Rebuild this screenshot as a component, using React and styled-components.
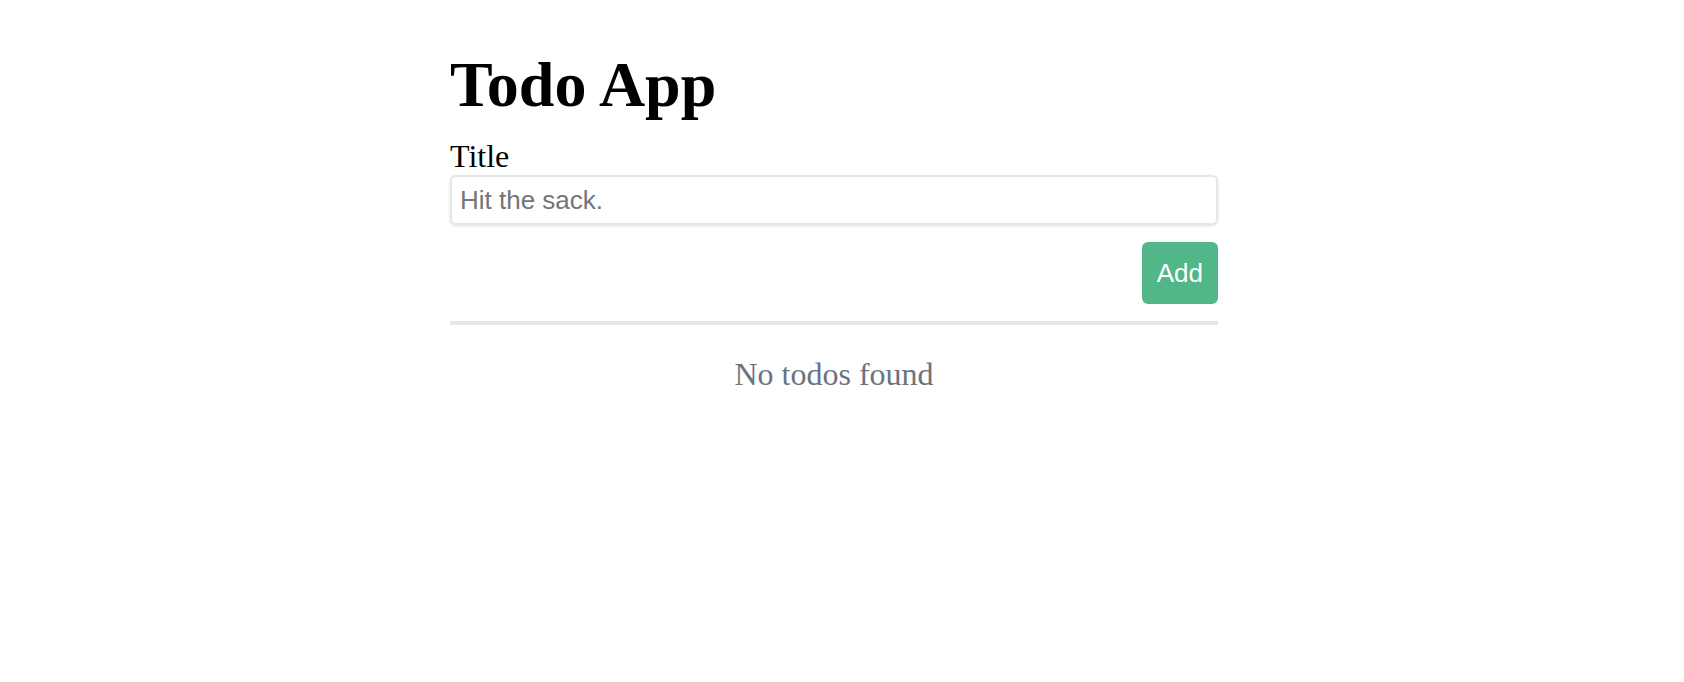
import React, { useState } from "react";
import styled, { createGlobalStyle } from "styled-components";

const GlobalStyle = createGlobalStyle`
  html, body {
    margin: 0;
    padding: 0;
    background: #ffffff;
  }
  body {
    font-family: 'Liberation Serif', 'Times New Roman', serif;
    color: #000000;
  }
`;

const App = () => {
    const [title, setTitle] = useState("");
    const [todos, setTodos] = useState([]);

    const addTodo = () => {
        if (!title.trim()) return;
        setTodos([...todos, {id: Date.now(), title: title.trim()}]);
        setTitle("");
    };

    return (
        <Page>
            <GlobalStyle/>
            <Container>
                <Heading>Todo App</Heading>
                <Label htmlFor="title">Title</Label>
                <TitleInput
                    id="title"
                    placeholder="Hit the sack."
                    value={title}
                    onChange={e => setTitle(e.target.value)}
                />
                <Actions>
                    <AddButton onClick={addTodo}>Add</AddButton>
                </Actions>
                <Divider/>
                {todos.length === 0 ? (
                    <Empty>No todos found</Empty>
                ) : (
                    <TodoList>
                        {todos.map(todo => <TodoItem key={todo.id}>{todo.title}</TodoItem>)}
                    </TodoList>
                )}
            </Container>
        </Page>
    );
};

const Page = styled.div`
  padding-right: 16px;
  min-height: 682px;
  box-sizing: border-box;
`;

const Container = styled.div`
  width: 768px;
  margin: 0 auto;
  padding-top: 55px;
`;

const Heading = styled.h1`
  margin: 0 0 23px;
  font-size: 64px;
  line-height: 60px;
  font-weight: 700;
`;

const Label = styled.label`
  display: block;
  font-size: 32px;
  line-height: 36px;
`;

const TitleInput = styled.input`
  display: block;
  box-sizing: border-box;
  width: 100%;
  height: 50px;
  margin-top: 1px;
  padding: 0 8px;
  border: 2px solid #e5e7eb;
  border-radius: 6px;
  box-shadow: 0 1px 3px rgba(0, 0, 0, 0.12);
  font-family: 'Liberation Sans', Arial, sans-serif;
  font-size: 26px;
  color: #111827;
  outline: none;

  &::placeholder {
    color: #757575;
  }
`;

const Actions = styled.div`
  display: flex;
  justify-content: flex-end;
  margin-top: 17px;
`;

const AddButton = styled.button`
  height: 62px;
  padding: 0 15px;
  border: none;
  border-radius: 6px;
  background: #52b788;
  color: #ffffff;
  font-family: 'Liberation Sans', Arial, sans-serif;
  font-size: 26px;
  cursor: pointer;
`;

const Divider = styled.div`
  margin-top: 17px;
  height: 4px;
  background: #e5e7eb;
`;

const Empty = styled.p`
  margin: 31px 0 0;
  text-align: center;
  font-size: 32px;
  line-height: 36px;
  color: #6b7280;
`;

const TodoList = styled.ul`
  list-style: none;
  margin: 24px 0 0;
  padding: 0;
`;

const TodoItem = styled.li`
  font-size: 26px;
  padding: 8px 0;
`;

export default App;
